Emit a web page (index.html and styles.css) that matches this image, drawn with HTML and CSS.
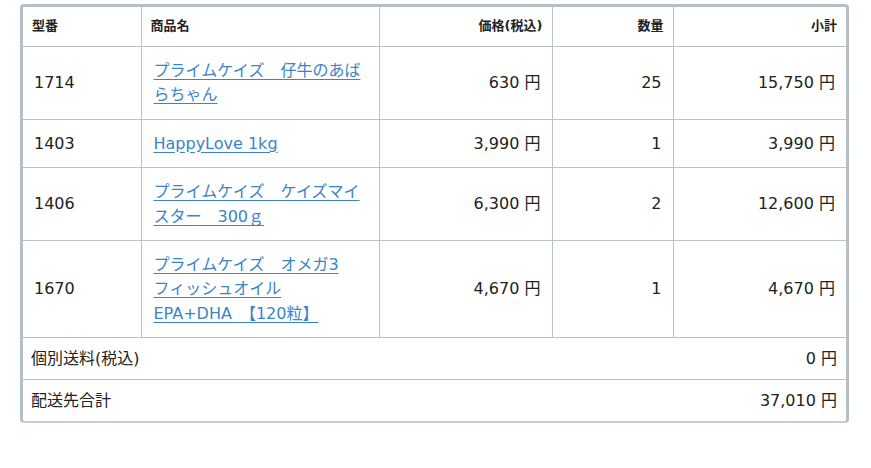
FILE: index.html
```html
<!DOCTYPE html>
<html lang="ja">
<head>
<meta charset="utf-8">
<title>注文内容</title>
<link rel="stylesheet" href="styles.css">
</head>
<body>
<div class="page">
  <div class="cart">
    <table class="cart-table">
      <colgroup>
        <col class="c-code">
        <col class="c-name">
        <col class="c-price">
        <col class="c-qty">
        <col class="c-sub">
      </colgroup>
      <thead>
        <tr>
          <th class="left">型番</th>
          <th class="left">商品名</th>
          <th class="right">価格(税込)</th>
          <th class="right">数量</th>
          <th class="right last">小計</th>
        </tr>
      </thead>
      <tbody>
        <tr>
          <td>1714</td>
          <td class="name"><a href="#">プライムケイズ　仔牛のあばらちゃん</a></td>
          <td class="right">630 円</td>
          <td class="right">25</td>
          <td class="right last">15,750 円</td>
        </tr>
        <tr>
          <td>1403</td>
          <td class="name"><a href="#">HappyLove 1kg</a></td>
          <td class="right">3,990 円</td>
          <td class="right">1</td>
          <td class="right last">3,990 円</td>
        </tr>
        <tr>
          <td>1406</td>
          <td class="name"><a href="#">プライムケイズ　ケイズマイスター　300ｇ</a></td>
          <td class="right">6,300 円</td>
          <td class="right">2</td>
          <td class="right last">12,600 円</td>
        </tr>
        <tr>
          <td>1670</td>
          <td class="name"><a href="#">プライムケイズ　オメガ3<br>フィッシュオイル<br>EPA+DHA　【120粒】</a></td>
          <td class="right">4,670 円</td>
          <td class="right">1</td>
          <td class="right last">4,670 円</td>
        </tr>
        <tr class="sum">
          <td colspan="2" class="label">個別送料(税込)</td>
          <td colspan="3" class="right last">0 円</td>
        </tr>
        <tr class="sum final">
          <td colspan="2" class="label">配送先合計</td>
          <td colspan="3" class="right last">37,010 円</td>
        </tr>
      </tbody>
    </table>
  </div>
</div>
</body>
</html>
```

FILE: styles.css
```css
html, body {
  margin: 0;
  padding: 0;
  background: #ffffff;
}

body {
  font-family: "DejaVu Sans", "Noto Sans CJK JP", sans-serif;
  font-size: 16px;
  color: #222222;
}

.page {
  padding: 4px 0 0 20px;
}

.cart {
  width: 823px;
  border: 3px solid #b3bfc7;
  border-bottom: 2px solid #c3ccd2;
  border-radius: 4px;
  overflow: hidden;
}

.cart-table {
  width: 100%;
  border-collapse: collapse;
  table-layout: fixed;
}

.c-code { width: 118px; }
.c-name { width: 238px; }
.c-price { width: 173px; }
.c-qty { width: 121px; }
.c-sub { width: auto; }

.cart-table th {
  font-size: 13px;
  font-weight: bold;
  line-height: 18px;
  padding: 10px 9px 11px 9px;
  border-right: 1px solid #b8c3ca;
  border-bottom: 1px solid #b8c3ca;
  color: #222222;
}

.cart-table td {
  line-height: 24.4px;
  padding: 12px 11px 11px 10px;
  border-right: 1px solid #b8c3ca;
  border-bottom: 1px solid #b8c3ca;
  vertical-align: middle;
}

.cart-table td:first-child {
  padding-left: 11px;
}

.cart-table td.name {
  padding-left: 12px;
  padding-right: 10px;
}

.cart-table .left { text-align: left; }
.cart-table .right { text-align: right; }
.cart-table .last { border-right: none; }

.cart-table td.right { padding-right: 11px; }

.cart-table a {
  color: #3b84c8;
  text-decoration: underline;
  text-underline-offset: 3px;
}

.cart-table tr.sum td {
  line-height: 24px;
  padding-top: 9px;
  padding-bottom: 8px;
}

.cart-table tr.sum td.label {
  padding-left: 8px;
  border-right: none;
}

.cart-table tr.sum td.right {
  padding-right: 9px;
}

.cart-table tr.final td {
  border-bottom: none;
}
```
